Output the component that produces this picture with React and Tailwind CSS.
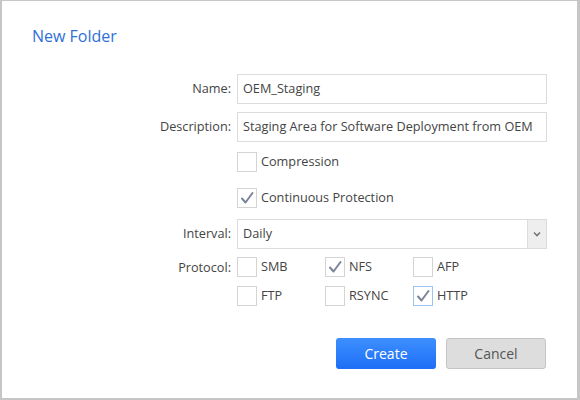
import React from "react";

function Check({ checked, focused }) {
  return (
    <span
      className={`flex h-[20px] w-[20px] shrink-0 items-center justify-center border bg-white ${
        focused ? "border-[#9dc3f0]" : "border-[#d4d4d4]"
      }`}
    >
      {checked && (
        <svg width="14" height="14" viewBox="0 0 14 14" fill="none">
          <path d="M2 7.5 L5.5 11.5 L12.5 2" stroke="#7b8599" strokeWidth="2" strokeLinecap="round" strokeLinejoin="round" />
        </svg>
      )}
    </span>
  );
}

function Option({ label, checked, focused, className = "" }) {
  return (
    <div className={`flex items-center gap-[4px] ${className}`}>
      <Check checked={checked} focused={focused} />
      <span>{label}</span>
    </div>
  );
}

function Row({ label, children, className = "", top = false }) {
  return (
    <div className={`flex ${top ? "items-start" : "items-center"} ${className}`}>
      <div className={`w-[229px] shrink-0 text-right ${top ? "leading-[20px]" : ""}`}>{label}</div>
      <div className="ml-[6px] flex-1">{children}</div>
    </div>
  );
}

export default function App() {
  return (
    <div
      className="h-[400px] w-[580px] border-b-2 border-l-2 border-r-[3px] border-t border-[#c6c6c6] bg-white text-[12.7px] text-[#444]"
      style={{ fontFamily: "'Open Sans', 'Noto Sans', sans-serif" }}
    >
      <h1 className="pl-[30px] pt-[24px] text-[16px] leading-[22px] text-[#2f6fd8]">New Folder</h1>

      <div className="mt-[27px] pr-[30px]">
        <Row label="Name:">
          <div className="flex h-[30px] w-[310px] items-center border border-[#dcdcdc] px-[5px]">OEM_Staging</div>
        </Row>
        <Row label="Description:" className="mt-[8px]">
          <div className="flex h-[30px] w-[310px] items-center whitespace-nowrap border border-[#dcdcdc] px-[5px]">
            Staging Area for Software Deployment from OEM
          </div>
        </Row>
        <Row label="" className="mt-[10px]">
          <Option label="Compression" />
        </Row>
        <Row label="" className="mt-[16px]">
          <Option label="Continuous Protection" checked />
        </Row>
        <Row label="Interval:" className="mt-[11px]">
          <div className="flex h-[30px] w-[310px] items-stretch border border-[#dcdcdc]">
            <div className="flex flex-1 items-center px-[5px]">Daily</div>
            <div className="flex w-[19px] items-center justify-center border-l border-[#dcdcdc] bg-[#eeeeee]">
              <svg width="8" height="6" viewBox="0 0 8 6" fill="none">
                <path d="M1 1.5 L4 4.5 L7 1.5" stroke="#777" strokeWidth="1.6" />
              </svg>
            </div>
          </div>
        </Row>
        <Row label="Protocol:" className="mt-[8px]" top>
          <div className="grid w-[270px] grid-cols-[88px_88px_88px] gap-y-[9px]">
            <Option label="SMB" />
            <Option label="NFS" checked />
            <Option label="AFP" />
            <Option label="FTP" />
            <Option label="RSYNC" />
            <Option label="HTTP" checked focused />
          </div>
        </Row>
      </div>

      <div className="mt-[32px] flex justify-end gap-[10px] pr-[31px]">
        <button className="h-[31px] w-[100px] rounded-[3px] bg-gradient-to-b from-[#3d8fff] to-[#1e6ef6] text-[14px] text-white">
          Create
        </button>
        <button className="h-[31px] w-[100px] rounded-[3px] border border-[#c4c4c4] bg-[#dddddd] text-[14px] text-[#555]">
          Cancel
        </button>
      </div>
    </div>
  );
}
